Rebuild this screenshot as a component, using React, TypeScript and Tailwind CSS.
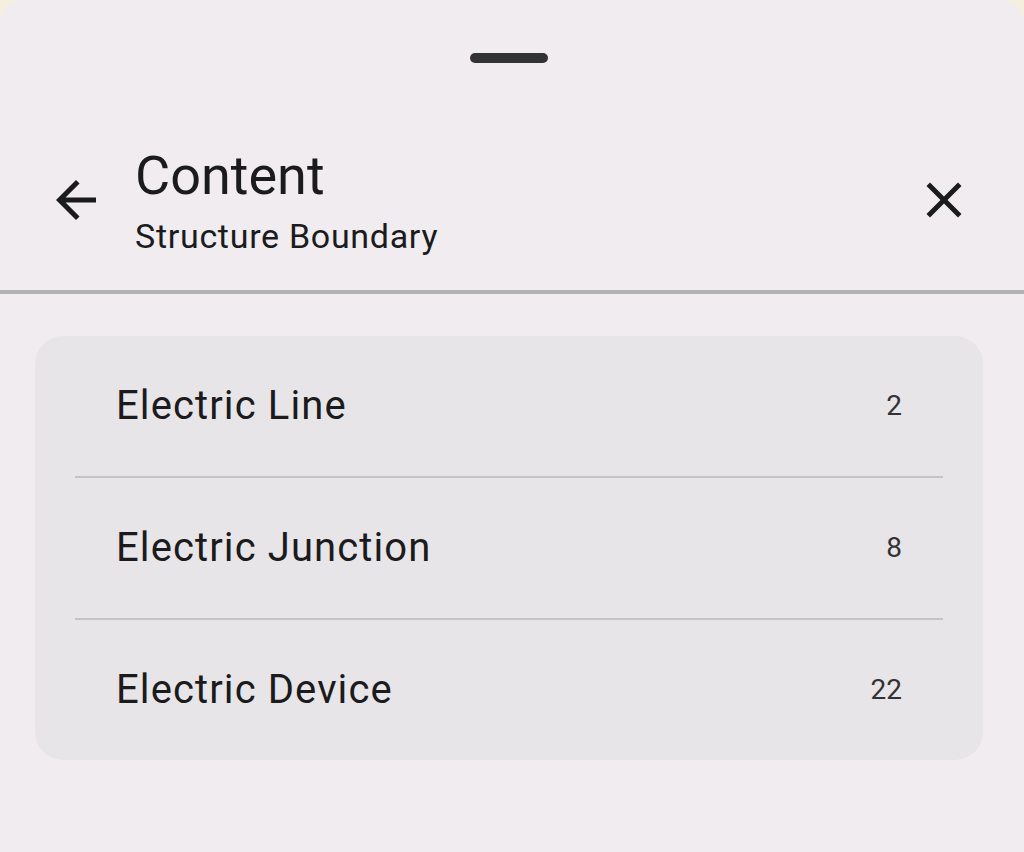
const items = [
  { name: "Electric Line", count: 2 },
  { name: "Electric Junction", count: 8 },
  { name: "Electric Device", count: 22 },
];

const ArrowBack = () => (
  <svg viewBox="0 0 24 24" className="w-[60px] h-[60px]" fill="#1b1b1d">
    <path d="M20 11H7.83l5.59-5.59L12 4l-8 8 8 8 1.41-1.41L7.83 13H20v-2z" />
  </svg>
);

const CloseIcon = () => (
  <svg viewBox="0 0 24 24" className="w-[60px] h-[60px]" fill="#1b1b1d">
    <path d="M19 6.41L17.59 5 12 10.59 6.41 5 5 6.41 10.59 12 5 17.59 6.41 19 12 13.41 17.59 19 19 17.59 13.41 12z" />
  </svg>
);

export default function App() {
  return (
    <div className="w-[1024px] h-[852px] bg-[#f5f0dd] overflow-hidden" style={{ fontFamily: "Roboto, 'Noto Sans', sans-serif" }}>
      <div className="h-full rounded-t-[24px] bg-[#f0ecef] flex flex-col">
        <div className="flex justify-center pt-[53px] pr-[6px]">
          <div className="w-[78px] h-[10px] rounded-full bg-[#333333]" />
        </div>

        <div className="flex items-center mt-[81px] pl-[46px] pr-[50px]">
          <ArrowBack />
          <div className="flex flex-col ml-[29px] grow">
            <h1 className="text-[54px] leading-[64px] text-[#1b1b1d]">Content</h1>
            <p className="text-[34px] leading-[40px] mt-[8px] tracking-[0.7px] text-[#1b1b1d]">Structure Boundary</p>
          </div>
          <CloseIcon />
        </div>

        <div className="mt-[34px] h-[4px] bg-[#b4b3b4]" />

        <div className="mt-[42px] ml-[35px] w-[948px] rounded-[28px] bg-[#e7e5e7] flex flex-col">
          {items.map((item, index) => (
            <div key={index}>
              {index > 0 && <div className="mx-[40px] h-[2px] bg-[#c4c3c5]" />}
              <div className="h-[140px] flex items-center justify-between pl-[81px] pr-[81px]">
                <span className="text-[40px] tracking-[1.1px] text-[#1b1b1d]">{item.name}</span>
                <span className="text-[28px] text-[#333136]">{item.count}</span>
              </div>
            </div>
          ))}
        </div>
      </div>
    </div>
  );
}
